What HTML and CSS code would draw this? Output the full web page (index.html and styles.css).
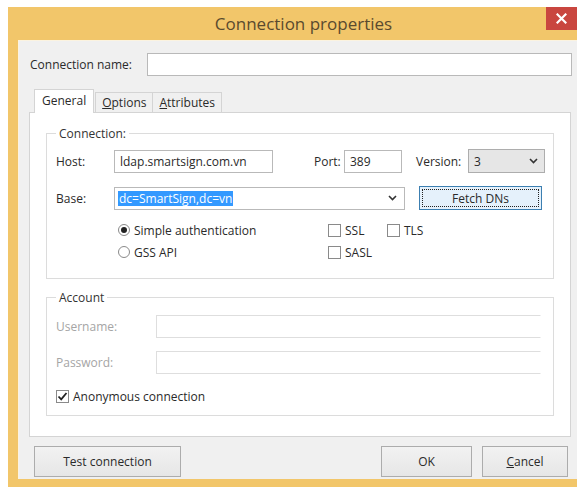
FILE: index.html
```html
<!DOCTYPE html>
<html>
<head>
<meta charset="utf-8">
<title>Connection properties</title>
<link rel="stylesheet" href="styles.css">
</head>
<body>
<div class="window">
  <div class="titlebar">
    <span class="title">Connection properties</span>
    <div class="close">
      <svg width="11" height="11" viewBox="0 0 11 11"><path d="M1.5 1.5 L9.5 9.5 M9.5 1.5 L1.5 9.5" stroke="#fff" stroke-width="2.2" stroke-linecap="square"/></svg>
    </div>
  </div>
  <div class="client">
    <div class="name-row">
      <span class="label">Connection name:</span>
      <div class="field name-field"></div>
    </div>

    <div class="tabs">
      <div class="tab active">General</div>
      <div class="tab"><u>O</u>ptions</div>
      <div class="tab"><u>A</u>ttributes</div>
    </div>

    <div class="panel">
      <fieldset class="group conn">
        <legend>Connection:</legend>
        <div class="row">
          <span class="label host-label">Host:</span>
          <div class="field host-field">ldap.smartsign.com.vn</div>
          <span class="label port-label">Port:</span>
          <div class="field port-field">389</div>
          <span class="label ver-label">Version:</span>
          <div class="select ver-select"><span>3</span>
            <svg class="chev" width="9" height="6" viewBox="0 0 9 6"><path d="M1 1 L4.5 4.5 L8 1" fill="none" stroke="#333" stroke-width="1.6"/></svg>
          </div>
        </div>
        <div class="row row-base">
          <span class="label host-label">Base:</span>
          <div class="field combo base-field"><span class="sel">dc=SmartSign,dc=vn</span>
            <svg class="chev" width="9" height="6" viewBox="0 0 9 6"><path d="M1 1 L4.5 4.5 L8 1" fill="none" stroke="#333" stroke-width="1.6"/></svg>
          </div>
          <div class="btn fetch"><span class="focus">Fetch DNs</span></div>
        </div>
        <div class="opts">
          <div class="opt auth"><span class="radio on"></span>Simple authentication</div>
          <div class="opt ssl"><span class="check"></span>SSL</div>
          <div class="opt tls"><span class="check"></span>TLS</div>
          <div class="opt auth"><span class="radio"></span>GSS API</div>
          <div class="opt ssl"><span class="check"></span>SASL</div>
        </div>
      </fieldset>

      <fieldset class="group account">
        <legend>Account</legend>
        <div class="row">
          <span class="label dim acc-label">Username:</span>
          <div class="field dim-field acc-field"></div>
        </div>
        <div class="row row-pass">
          <span class="label dim acc-label">Password:</span>
          <div class="field dim-field acc-field"></div>
        </div>
        <div class="opt anon"><span class="check checked">
          <svg width="11" height="11" viewBox="0 0 11 11"><path d="M1.5 5.5 L4.2 8.3 L9.5 2" fill="none" stroke="#222" stroke-width="1.8"/></svg>
        </span>Anonymous connection</div>
      </fieldset>
    </div>

    <div class="buttons">
      <div class="btn test">Test connection</div>
      <div class="btn ok">OK</div>
      <div class="btn cancel"><u>C</u>ancel</div>
    </div>
  </div>
</div>
</body>
</html>
```

FILE: styles.css
```css
html, body {
  margin: 0;
  padding: 0;
  background: #ffffff;
  overflow: hidden;
}

body {
  padding: 7px 0 0 8px;
  font-family: "Open Sans", "Noto Sans", sans-serif;
  font-size: 12px;
  color: #2a2a2a;
}

.window {
  width: 569px;
  height: 480px;
  background: #f2c66a;
  padding: 0 0 8px 10px;
  box-sizing: border-box;
  display: flex;
  flex-direction: column;
}

.titlebar {
  height: 33px;
  position: relative;
  display: flex;
  align-items: center;
  justify-content: center;
}

.title {
  font-size: 17px;
  color: #5a4a2e;
  margin-left: 12px;
}

.close {
  position: absolute;
  top: 0;
  right: 0;
  width: 31px;
  height: 23px;
  background: #c9463f;
  display: flex;
  align-items: center;
  justify-content: center;
}

.client {
  flex: 1;
  background: #f0f0f0;
  border-top: 1px solid #fbf3e0;
  border-left: 1px solid #fbf3e0;
  display: flex;
  flex-direction: column;
  padding: 12px 0 0 11px;
}

.label {
  white-space: nowrap;
}

.field {
  background: #ffffff;
  border: 1px solid #b9b9b9;
  height: 23px;
  box-sizing: border-box;
  display: flex;
  align-items: center;
  padding-left: 5px;
}

.name-row {
  display: flex;
  align-items: center;
}

.name-row .label {
  width: 117px;
}

.name-field {
  width: 425px;
}

/* tab strip */
.tabs {
  display: flex;
  align-items: flex-end;
  margin: 13px 0 0 4px;
  height: 23px;
  position: relative;
  z-index: 1;
}

.tab {
  height: 20px;
  box-sizing: border-box;
  border: 1px solid #d4d4d4;
  border-bottom: none;
  background: #f0f0f0;
  padding: 1px 6px 0;
  margin-left: -1px;
}

.tab.active {
  height: 24px;
  background: #ffffff;
  padding: 2px 7px 0;
  margin: 0 2px -1px 0;
}

.panel {
  width: 542px;
  height: 325px;
  margin-left: -1px;
  background: #ffffff;
  border: 1px solid #d4d4d4;
  box-sizing: border-box;
  padding: 12px 0 0 16px;
}

.group {
  width: 508px;
  margin: 0;
  padding: 0 0 0 9px;
  border: 1px solid #dcdcdc;
  box-sizing: border-box;
}

.group legend {
  padding: 0 3px;
  margin-left: 0;
  color: #333;
}

.conn {
  height: 154px;
}

.row {
  display: flex;
  align-items: center;
  margin-top: 7px;
}

.host-label {
  width: 58px;
}

.host-field {
  width: 159px;
}

.port-label {
  margin-left: 41px;
  width: 30px;
}

.port-field {
  width: 58px;
}

.ver-label {
  margin-left: 14px;
  width: 52px;
}

.select {
  width: 77px;
  height: 24px;
  box-sizing: border-box;
  background: #e6e6e6;
  border: 1px solid #adadad;
  display: flex;
  align-items: center;
  justify-content: space-between;
  padding: 0 6px 0 5px;
}

.row-base {
  margin-top: 13px;
}

.combo {
  width: 291px;
  justify-content: space-between;
  padding: 0 7px 0 3px;
}

.sel {
  background: #3399ff;
  color: #ffffff;
  padding: 0 1px;
  line-height: 15px;
}

.btn {
  box-sizing: border-box;
  border: 1px solid #acacac;
  background: linear-gradient(#f2f2f2, #e6e6e6);
  display: flex;
  align-items: center;
  justify-content: center;
}

.fetch {
  width: 123px;
  height: 24px;
  margin-left: 14px;
  background: #e5f1fb;
  border-color: #3c7fb1;
  padding: 2px;
}

.focus {
  flex: 1;
  align-self: stretch;
  border: 1px dotted #222;
  display: flex;
  align-items: center;
  justify-content: center;
}

.opts {
  display: grid;
  grid-template-columns: 210px 59px auto;
  grid-auto-rows: 22px;
  margin: 9px 0 0 62px;
}

.opt {
  display: flex;
  align-items: center;
  white-space: nowrap;
}

.opts .auth {
  grid-column: 1;
}

.opts .ssl {
  grid-column: 2;
}

.radio {
  width: 12px;
  height: 12px;
  border-radius: 50%;
  border: 1px solid #8a8a8a;
  background: #ffffff;
  box-sizing: border-box;
  margin-right: 4px;
  position: relative;
}

.radio.on::after {
  content: "";
  position: absolute;
  left: 2px;
  top: 2px;
  width: 6px;
  height: 6px;
  border-radius: 50%;
  background: #222;
}

.check {
  width: 13px;
  height: 13px;
  border: 1px solid #8a8a8a;
  background: #ffffff;
  box-sizing: border-box;
  margin-right: 4px;
  display: flex;
  align-items: center;
  justify-content: center;
}

.account {
  margin-top: 10px;
  height: 127px;
}

.account .row {
  margin-top: 9px;
}

.account .row-pass {
  margin-top: 13px;
}

.dim {
  color: #a5a5a5;
}

.acc-label {
  width: 100px;
}

.dim-field {
  width: 385px;
  border-color: #dedede;
  border-right-color: #ffffff;
}

.anon {
  margin-top: 14px;
}

.buttons {
  display: flex;
  margin: 9px 0 0 4px;
}

.buttons .btn {
  height: 31px;
}

.test {
  width: 147px;
}

.ok {
  width: 91px;
  margin-left: 200px;
}

.cancel {
  width: 86px;
  margin-left: 10px;
}
```
